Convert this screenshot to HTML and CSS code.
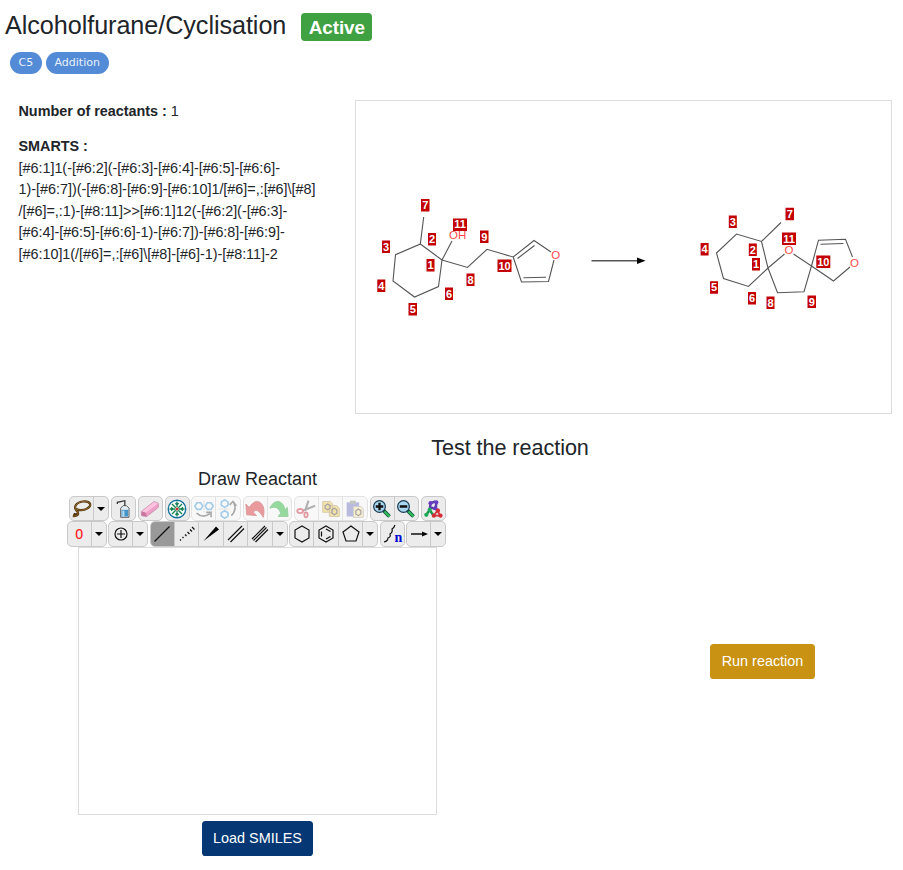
FILE: index.html
```html
<!DOCTYPE html>
<html lang="en">
<head>
<meta charset="utf-8">
<title>Alcoholfurane/Cyclisation</title>
<link rel="stylesheet" href="styles.css">
</head>
<body>
<header>
  <h1>Alcoholfurane/Cyclisation <span class="status">Active</span></h1>
  <div class="tags"><span class="tag">C5</span><span class="tag">Addition</span></div>
</header>
<section class="details">
  <div class="info">
    <p><b>Number of reactants :</b> 1</p>
    <p><b>SMARTS :</b><br>[#6:1]1(-[#6:2](-[#6:3]-[#6:4]-[#6:5]-[#6:6]-<br>1)-[#6:7])(-[#6:8]-[#6:9]-[#6:10]1/[#6]=,:[#6]\[#8]<br>/[#6]=,:1)-[#8:11]&gt;&gt;[#6:1]12(-[#6:2](-[#6:3]-<br>[#6:4]-[#6:5]-[#6:6]-1)-[#6:7])-[#6:8]-[#6:9]-<br>[#6:10]1(/[#6]=,:[#6]\[#8]-[#6]-1)-[#8:11]-2</p>
  </div>
  <svg class="scheme" viewBox="356 101 535 312">
    <g class="bonds">
      <path d="M423.7 217L420.3 244L395.5 254.7L393 281L414.5 297L438.5 286.5L442 260L420.3 244M442 260L452 241M442 260L467.5 267.5L487 249.3L513.2 257L534 240.5L551 252M513.2 257L521.5 282L548.5 281.5L554 260M517.5 258.5L534.5 245.5M523.5 277.8L546 277.3"/>
      <path d="M781 222.5L761.5 241.5L736.5 234L716.5 253L723.5 278.5L748.5 286.5L768 268L761.5 241.5M768 268L784.5 254M793.5 254L811.5 266L804 291.7L777.5 292.7L768 268M811.5 266L818.5 240.2L845.5 239.3L852.5 257M811.5 266L833.5 281L850 267M820.5 244.3L843.5 243.5"/>
      <path class="shaft" d="M591.5 260.7H638"/>
    </g>
    <path d="M637 257.5L645.5 260.7L637 264Z"/>
    <g class="labels">
      <path d="M421 199h8.500v12.500h-8.500zM453 218.500h14v12.500h-14zM428 233h8v12.500h-8zM480 230.500h8.500v12.500h-8.500zM382 240.500h8v12.500h-8zM426.500 259h8v12.500h-8zM497.500 259.500h14v12.500h-14zM377.300 279.500h8v12.500h-8zM466.500 273.500h8v12.500h-8zM445 287.500h8v12.500h-8zM408.500 303h8.500v12.500h-8.500zM785.500 207.700h8.500v12.500h-8.500zM728.800 215.500h8v12.500h-8zM782 232.500h14v12.500h-14zM700.600 243h8v12.500h-8zM748.800 243.500h8v12.500h-8zM752 258h8v12.500h-8zM816.300 255.500h14v12.500h-14zM710 281.300h8v12.500h-8zM748 292h8v12.500h-8zM766.500 296.500h8v12.500h-8zM807.500 295.500h8.500v12.500h-8.500z"/>
      <text x="425.200" y="209">7</text><text x="460" y="228">11</text><text x="432" y="243">2</text><text x="484.200" y="240.500">9</text><text x="386" y="250.500">3</text><text x="430.500" y="269">1</text><text x="504.500" y="269.500">10</text><text x="381.300" y="289.500">4</text><text x="470.500" y="283.500">8</text><text x="449" y="297.500">6</text><text x="412.700" y="313">5</text>
      <text x="789.700" y="217.700">7</text><text x="732.800" y="225.500">3</text><text x="789" y="242.500">11</text><text x="704.600" y="253">4</text><text x="752.800" y="253.500">2</text><text x="756" y="268">1</text><text x="823.300" y="265.500">10</text><text x="714" y="291.300">5</text><text x="752" y="302">6</text><text x="770.500" y="306.500">8</text><text x="811.700" y="305.500">9</text>
    </g>
    <g class="hetero"><text x="457.700" y="239">OH</text><text x="555.800" y="258.700">O</text><text x="789" y="254">O</text><text x="854.500" y="267">O</text></g>
  </svg>
</section>
<h2>Test the reaction</h2>
<section class="test">
  <div class="reactant">
    <h3>Draw Reactant</h3>
    <div class="toolbar">
      <div class="group"><span class="cell"><svg viewBox="0 0 24 24"><path d="M1 20.500C7 21 9 18 6 14.500C1 10 5 4 13 3C22 2 25 8 18 11.500C14 14 8 14 5 12M6 14C9 17 5 20 2 17.500" fill="none" stroke="#4d320d" stroke-width="2.600"/><path d="M1 20.500C7 21 9 18 6 14.500C1 10 5 4 13 3C22 2 25 8 18 11.500C14 14 8 14 5 12" fill="none" stroke="#a57530"/></svg></span><span class="cell drop"></span></div>
      <div class="group"><span class="cell"><svg viewBox="0 0 24 24"><path d="M4 6V4L13 2V9" fill="none" stroke="#333" stroke-width="1.500"/><path d="M8 11L11 8H15L18 11V22H8Z" fill="#e5eef3" stroke="#444"/><path d="M9 13H17V21H9Z" fill="#4795c8"/><path d="M10 14H12.500V21H10Z" fill="#b4ddf3"/></svg></span></div>
      <div class="group"><span class="cell"><svg viewBox="0 0 24 24"><path d="M1.500 15L17 3L22 5V10L8 21L2 20Z" fill="#ef9fc8" stroke="#c98aab"/><path d="M2 15L17 3.500L22 5L7 16.500Z" fill="#ffc3df"/><path d="M2 15L7 16.500L8 21L2 20Z" fill="#c9769e"/></svg></span></div>
      <div class="group"><span class="cell"><svg viewBox="0 0 24 24"><circle cx="12" cy="12" r="10.500" fill="#fff" stroke="#17739d" stroke-width="1.600"/><path d="M12 3V10M12 14V21M3 12H10M14 12H21M6 6L10.500 10.500M18 6L13.500 10.500M6 18L10.500 13.500M18 18L13.500 13.500M10 5L12 7L14 5M10 19L12 17L14 19M5 10L7 12L5 14M19 10L17 12L19 14" fill="none" stroke="#168353" stroke-width="1.600"/><circle cx="12" cy="12" r="1.800" fill="#d12f32"/></svg></span></div>
      <div class="group off"><span class="cell"><svg viewBox="0 0 24 24"><path d="M12 2V16" stroke="#999" stroke-dasharray="2 1"/><path d="M1 8.500L3.500 4.500H8L10.500 8.500L8 12.500H3.500ZM13.500 8.500L16 4.500H20.500L23 8.500L20.500 12.500H16Z" fill="none" stroke="#268bcf" stroke-width="2"/><path d="M3 17Q11 24 19 17.500M14.500 16H20.500V22" fill="none" stroke="#333" stroke-width="2"/></svg></span><span class="cell"><svg viewBox="0 0 24 24"><path d="M1 12H14" stroke="#999" stroke-dasharray="2 1"/><path d="M8 1L12 3.500V7.500L8 10L4 7.500V3.500ZM8 14L12 16.500V20.500L8 23L4 20.500V16.500Z" fill="none" stroke="#268bcf" stroke-width="2"/><path d="M16 20Q23 13 19 5M14 7L18 3L22 8" fill="none" stroke="#333" stroke-width="2"/></svg></span></div>
      <div class="group off"><span class="cell"><svg viewBox="0 0 24 24"><path d="M1 6L2 19L14 20L10 16Q14 9 22 22Q25 9 18 4Q12 0 5 10Z" fill="#d20e13" stroke="#a60d10"/></svg></span><span class="cell"><svg viewBox="0 0 24 24"><path d="M22 10L23 21L11 21L14 17Q11 7 1 11Q5 2 12 3Q18 5 19 13Z" fill="#00ab16" stroke="#078b17"/></svg></span></div>
      <div class="group off"><span class="cell"><svg viewBox="0 0 24 24"><path d="M15 2L11 14M23 8L8 14" stroke="#444" stroke-width="2.500"/><ellipse cx="5" cy="14.500" rx="3.500" ry="2.500" fill="none" stroke="#bd1220" stroke-width="2.200"/><ellipse cx="12" cy="19" rx="2" ry="3" fill="none" stroke="#bd1220" stroke-width="2.200"/></svg></span><span class="cell"><svg viewBox="0 0 24 24"><path d="M2 3H11L14 6V16H2ZM10 8H19L22 11V21H10Z" fill="#e9bd38" stroke="#977b2d"/><path d="M5 8L8 6L11 8V11L8 13L5 11ZM13 13L16 11L19 13V17L16 19L13 17Z" fill="none" stroke="#222" stroke-width="1.400"/></svg></span><span class="cell"><svg viewBox="0 0 24 24"><path d="M2 4H17V21H2Z" fill="#5960b3"/><path d="M6 2H13V6H6Z" fill="#777"/><path d="M10 9H19L22 12V22H10Z" fill="#f6df92" stroke="#888"/><path d="M13 14L16 12L19 14V18L16 20L13 18Z" fill="none" stroke="#222" stroke-width="1.400"/></svg></span></div>
      <div class="group"><span class="cell"><svg viewBox="0 0 24 24"><path d="M14 14L21 21" stroke="#154" stroke-width="4.500"/><path d="M15 15L21 21" stroke="#2fc05d" stroke-width="2.500"/><circle cx="9" cy="9" r="7" fill="#a9d7ef" stroke="#193e53" stroke-width="1.500"/><path d="M4.500 9H13.500M9 4.500V13.500" stroke="#111" stroke-width="2.800"/></svg></span><span class="cell"><svg viewBox="0 0 24 24"><path d="M14 14L21 21" stroke="#154" stroke-width="4.500"/><path d="M15 15L21 21" stroke="#2fc05d" stroke-width="2.500"/><circle cx="9" cy="9" r="7" fill="#a9d7ef" stroke="#193e53" stroke-width="1.500"/><path d="M4.500 9H13.500" stroke="#111" stroke-width="2.800"/></svg></span></div>
      <div class="group"><span class="cell"><svg viewBox="0 0 24 24"><path d="M8 14L9 5L15 3M9 10L15 12L16 5" fill="none" stroke="#5940ad" stroke-width="3"/><path d="M4 19L8 13L12 19" fill="none" stroke="#169448" stroke-width="3"/><path d="M13 20L17 14L21 20Z" fill="none" stroke="#d52c35" stroke-width="2"/><g fill="#683dc3"><circle cx="9" cy="5" r="2.500"/><circle cx="16" cy="4" r="2.500"/><circle cx="15" cy="11" r="2.500"/></g><g fill="#21a95b"><circle cx="4" cy="19" r="2.500"/><circle cx="8" cy="13" r="2.500"/></g><g fill="#d52c35"><circle cx="13" cy="20" r="2.500"/><circle cx="18" cy="14" r="2.500"/><circle cx="21" cy="20" r="2.500"/></g></svg></span></div>
    </div>
    <div class="toolbar second">
      <div class="group"><span class="cell atom">O</span><span class="cell drop"></span></div>
      <div class="group"><span class="cell"><svg viewBox="0 0 24 24"><path d="M12 8V16M8 12H16M18 12A6 6 0 1 1 6 12A6 6 0 1 1 18 12" class="line"/></svg></span><span class="cell drop"></span></div>
      <div class="group"><span class="cell selected"><svg viewBox="0 0 24 24"><path d="M4.500 19.500L19.500 4.500" class="line"/></svg></span><span class="cell"><svg viewBox="0 0 24 24"><path d="M5 17.500L6 18.500M7.500 15L8.500 16M10 12.500L11.500 14M12.500 10L14.500 12M15 7.500L17 9.500M17 5L19.500 7.500" class="line"/></svg></span><span class="cell"><svg viewBox="0 0 24 24"><path d="M4.500 19L17 4.500L20 7.500Z"/></svg></span><span class="cell"><svg viewBox="0 0 24 24"><path d="M4 18L18 4M6.500 20L20 6.500" class="line"/></svg></span><span class="cell"><svg viewBox="0 0 24 24"><path d="M4 17L17 4M5.500 18.500L18.500 5.500M7.500 20L20 7.500" class="line"/></svg></span><span class="cell drop"></span></div>
      <div class="group"><span class="cell"><svg viewBox="0 0 24 24"><path d="M12 4L19 8V16L12 20L5 16V8Z" class="line"/></svg></span><span class="cell"><svg viewBox="0 0 24 24"><path d="M12 4L19 8V16L12 20L5 16V8ZM12 7L16.500 9.500M16.500 14.500L12 17M7.500 9.500V14.500" class="line"/></svg></span><span class="cell"><svg viewBox="0 0 24 24"><path d="M12 4L20 10L17 19H7L4 10Z" class="line"/></svg></span><span class="cell drop"></span></div>
      <div class="group"><span class="cell"><svg viewBox="0 0 24 24"><path d="M15 3Q14 6 12 7Q13 10 10 12Q11 15 8 16Q8 19 4 20" class="line"/><text x="14.500" y="20" class="chain">n</text></svg></span></div>
      <div class="group"><span class="cell"><svg viewBox="0 0 24 24"><path d="M4 12H17" class="line thick"/><path d="M15 9.500L21 12L15 14.500Z"/></svg></span><span class="cell drop"></span></div>
    </div>
    <div class="canvas"></div>
    <button class="btn load">Load SMILES</button>
  </div>
  <div class="run"><button class="btn gold">Run reaction</button></div>
</section>
</body>
</html>
```

FILE: styles.css
```css
* { box-sizing: border-box; }
body {
  margin: 0;
  height: 870px;
  overflow: hidden;
  background: #fff;
  color: #212529;
  font: 14.4px/21.6px "Liberation Sans", Arial, sans-serif;
}
h1, h2, h3, p { margin: 0; font-weight: 400; }
header { padding: 9px 0 0 5px; height: 100px; }
h1 {
  display: flex;
  align-items: center;
  gap: 15px;
  height: 32px;
  font-size: 25.2px;
  line-height: 30px;
  letter-spacing: -.06px;
}
.status {
  margin-top: 4px;
  width: 71px;
  height: 28px;
  border-radius: 4px;
  background: #3fa142;
  color: #fff;
  font-size: 18.9px;
  font-weight: 700;
  line-height: 29px;
  text-align: center;
}
.tags { display: flex; gap: 4px; padding: 11px 0 0 5px; }
.tag {
  height: 22px;
  padding: 0 8.6px;
  border-radius: 11px;
  background: #538bd7;
  color: #e9f1fb;
  font: 11px/22px "DejaVu Sans", sans-serif;
}
.details { display: flex; height: 314px; }
.info { width: 355px; padding: 1px 0 0 18.5px; white-space: nowrap; letter-spacing: -.02px; }
.info p { margin-bottom: 13.4px; }
.scheme { width: 537px; height: 314px; border: 1px solid #dcdcdc; }
.bonds { fill: none; stroke: #555; stroke-width: 1.1; }
.shaft { stroke: #555; stroke-width: 1.4; }
.labels { fill: #c20000; }
.labels text {
  fill: #fff;
  font: bold 11px "Liberation Sans", sans-serif;
  text-anchor: middle;
}
.hetero { fill: #ff4a4a; font: 11.5px "Liberation Sans", sans-serif; text-anchor: middle; }
h2 { margin: 20px 0 0 117px; font-size: 21.6px; line-height: 27px; text-align: center; letter-spacing: -.05px; }
.test { display: flex; }
.reactant { width: 515px; display: flex; flex-direction: column; align-items: center; }
h3 { height: 35px; padding-top: 7px; font-size: 18px; line-height: 22px; }
.toolbar { display: flex; gap: 1.75px; height: 25px; }
.second { height: 26px; margin-left: -2px; gap: 1.5px; }
.group {
  display: flex;
  overflow: hidden;
  height: 100%;
  border: 1px solid #c9c9c9;
  border-radius: 5px;
  background: #ececec;
}
.off > .cell > svg { opacity: .4; }
.group.off { border-color: #e3e3e3; background: #f8f8f8; }
.cell { display: flex; align-items: center; justify-content: center; width: 24.5px; }
.cell + .cell { border-left: 1px solid #c9c9c9; }
.off .cell + .cell { border-color: #e3e3e3; }
.cell:first-child { width: 23px; }
.cell svg { flex: none; width: 20px; height: 20px; }
.second .cell svg { width: 24px; height: 24px; }
.cell.drop { width: 15px; }
.drop::before { content: ""; border: 4px solid transparent; border-top: 4.5px solid #000; border-bottom: 0; }
.selected { background: #999; }
.atom { color: #f22; font: 14px "DejaVu Sans Mono", monospace; }
.line { fill: none; stroke: #111; stroke-width: 1.2; }
.thick { stroke-width: 1.5; }
.chain { fill: #0000d0; font: bold 14px "Liberation Serif", serif; }
.canvas { width: 359px; height: 268px; border: 1px solid #dcdcdc; }
.btn {
  height: 35px;
  padding: 0 0 2px;
  border: 0;
  border-radius: 3.6px;
  color: #fff;
  font: 14.4px "Liberation Sans", Arial, sans-serif;
}
.load { width: 111px; margin-top: 6px; background: #053775; }
.run { width: 387px; padding: 183px 0 0 195px; }
.gold { width: 105px; background: #c99212; }
```
